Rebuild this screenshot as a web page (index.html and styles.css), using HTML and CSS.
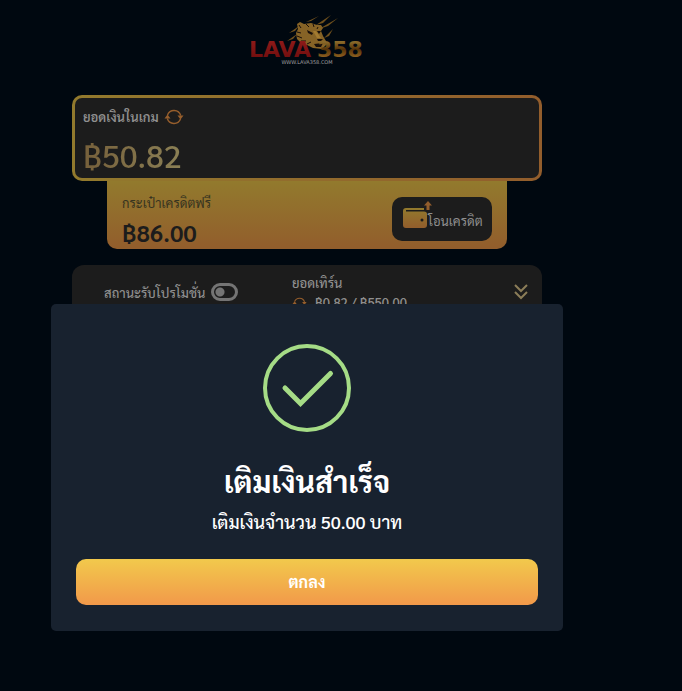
FILE: index.html
```html
<!DOCTYPE html>
<html lang="th">
<head>
  <meta charset="UTF-8">
  <meta name="viewport" content="width=device-width, initial-scale=1.0">
  <title>LAVA 358</title>
  <link rel="stylesheet" href="styles.css">
</head>
<body>
  <svg class="defs" width="0" height="0" aria-hidden="true">
    <defs>
      <linearGradient id="gold" x1="0" y1="0" x2="0" y2="1">
        <stop offset="0" stop-color="#927a2d"/>
        <stop offset="1" stop-color="#925d2c"/>
      </linearGradient>
      <linearGradient id="red" x1="0" y1="0" x2="0" y2="1">
        <stop offset="0" stop-color="#941d1b"/>
        <stop offset="1" stop-color="#6b0b0c"/>
      </linearGradient>
      <linearGradient id="bronze" x1="0" y1="0" x2="0" y2="1">
        <stop offset="0.2" stop-color="#8a6a2a"/>
        <stop offset="0.5" stop-color="#553208"/>
        <stop offset="0.8" stop-color="#8d6020"/>
      </linearGradient>
      <symbol id="refresh" viewBox="0 0 20 16">
        <path d="M3.5 6A7 7 0 0 1 16.7 6.5M16.5 10A7 7 0 0 1 3.3 9.5" fill="none" stroke="#965e2c" stroke-width="1.4"/>
        <path d="M0.5 9.5L3.5 5.5L6.5 9.5ZM13.5 6.5H19.5L16.5 10.5Z" fill="#965e2c"/>
      </symbol>
    </defs>
  </svg>

  <div class="page">
    <header class="header">
      <svg class="logo" viewBox="0 0 120 56" role="img" aria-label="LAVA 358">
        <!-- claw marks -->
        <path d="M59 11L72 5L64 10ZM69 14L84 4L76 12ZM72 18L91 7L81 15ZM77 27L86 18L82 25ZM42 22L52 15L48 20ZM40 30L50 23L46 28Z" fill="#70511d"/>
        <!-- tiger head -->
        <path d="M50 13L53 11L57 13L64 12L70 14L74 14L76 17L74 20L76 25L79 30L79 34L75 38L66 37L60 34L54 32L50 28L49 22L51 18Z" fill="#866326"/>
        <path d="M52 14L54 17M59 13L62 16M66 13L67 16M50 21L54 22M50 25L55 27M54 30L59 30M60 33L64 31M71 16L70 18" fill="none" stroke="#180f0a" stroke-width="1"/>
        <path d="M60 19L66 22L65 24L61 22ZM70 20L74 20L72 23ZM70 28L76 28L74 30L71 30ZM67 33L76 32L74 36L69 36Z" fill="#180f0a"/>
        <path d="M66 20L69 20L74 27L70 27Z" fill="#a37b30"/>
        <text class="logo-name" x="2" y="46" fill="url(#red)">LAVA</text>
        <text class="logo-name" x="70" y="46" fill="url(#bronze)">358</text>
        <text class="logo-url" x="60" y="53" text-anchor="middle">WWW.LAVA358.COM</text>
      </svg>
    </header>

    <main class="wallet">
      <section class="balance">
        <div class="balance-title">
          <h2>ยอดเงินในเกม</h2>
          <button class="icon-btn" type="button" aria-label="รีเฟรช">
            <svg width="20" height="16"><use href="#refresh"/></svg>
          </button>
        </div>
        <p class="balance-amount">฿50.82</p>
      </section>

      <section class="credit">
        <div>
          <p class="credit-title">กระเป๋าเครดิตฟรี</p>
          <p class="credit-amount">฿86.00</p>
        </div>
        <button class="transfer" type="button">
          <svg width="30" height="30" viewBox="0 0 30 30">
            <path d="M4 8H22V10H4V11.500H22Q25 11.500 25 14V25Q25 28 22 28H4Q1 28 1 25V11Q1 8 4 8Z" fill="url(#gold)"/>
            <circle cx="20" cy="20" r="1.5" fill="#1c1c1c"/>
            <path d="M26 1L30 5.500H27.500V10H24.500V5.500H22Z" fill="#925d2c"/>
          </svg>
          <span>โอนเครดิต</span>
        </button>
      </section>

      <section class="promo">
        <label class="promo-status">
          <span>สถานะรับโปรโมชั่น</span>
          <input class="toggle" type="checkbox">
        </label>
        <div class="turnover">
          <p>ยอดเทิร์น</p>
          <div class="turnover-value">
            <button class="icon-btn" type="button" aria-label="รีเฟรชยอดเทิร์น">
              <svg width="15" height="12"><use href="#refresh"/></svg>
            </button>
            <span>฿0.82 / ฿550.00</span>
          </div>
        </div>
        <button class="icon-btn expand" type="button" aria-label="แสดงเพิ่มเติม">
          <svg width="14" height="16" viewBox="0 0 14 16">
            <path d="M1 1L7 7L13 1M1 8L7 14L13 8" fill="none" stroke="#8b7d58" stroke-width="2"/>
          </svg>
        </button>
      </section>
    </main>
  </div>

  <div class="overlay">
    <div class="modal" role="dialog" aria-modal="true" aria-labelledby="modal-title">
      <svg class="modal-icon" viewBox="0 0 88 88" aria-hidden="true">
        <circle cx="44" cy="44" r="42" fill="none" stroke="#a5dc86" stroke-width="4"/>
        <path d="M22 44L37.500 59.500L67.500 29.500" fill="none" stroke="#a5dc86" stroke-width="5" stroke-linecap="round"/>
      </svg>
      <h1 id="modal-title">เติมเงินสำเร็จ</h1>
      <p class="modal-text">เติมเงินจำนวน 50.00 บาท</p>
      <button class="confirm" type="button">ตกลง</button>
    </div>
  </div>
</body>
</html>
```

FILE: styles.css
```css
* {
  margin: 0;
  padding: 0;
  box-sizing: border-box;
}
body {
  min-height: 100vh;
  background-color: #000810;
  font-family: Sarabun, "Noto Sans Thai", "Noto Sans", sans-serif;
  color: #8f8f8f;
}
button {
  border: none;
  background: none;
  font-family: inherit;
  cursor: pointer;
}
svg {
  display: block;
}
.defs {
  position: absolute;
}
.page,
.overlay {
  padding-right: 68px;
}

.header {
  padding-top: 11px;
  height: 95px;
}
.logo {
  width: 120px;
  height: 56px;
  margin: 0 auto;
}
.logo-name {
  font-family: "DejaVu Sans", sans-serif;
  font-size: 22px;
  font-weight: bold;
}
.logo-url {
  font-family: "DejaVu Sans", sans-serif;
  font-size: 5px;
  fill: #a0a0a0;
}

.wallet {
  max-width: 470px;
  margin: 0 auto;
}
.balance {
  height: 86px;
  padding: 7px 8px;
  border: 3px solid transparent;
  border-radius: 10px;
  background: linear-gradient(#1c1c1c, #1c1c1c) padding-box,
              linear-gradient(90deg, #927a2d, #925d2c) border-box;
}
.balance-title {
  display: flex;
  align-items: center;
  gap: 5px;
  height: 24px;
}
.balance-title h2 {
  font-size: 13px;
  font-weight: 600;
  line-height: 22px;
}
.balance-amount {
  width: fit-content;
  font-size: 32px;
  font-weight: 500;
  line-height: 52px;
  background: linear-gradient(90deg, #76603b, #8b8055);
  background-clip: text;
  color: transparent;
}

.credit {
  display: flex;
  justify-content: space-between;
  align-items: center;
  height: 68px;
  margin: 0 35px;
  padding: 8px 15px 0;
  border-radius: 0 0 10px 10px;
  background: linear-gradient(#927a2d, #925d2c);
  color: #1c1c1c;
}
.credit-title {
  font-size: 13px;
  line-height: 26px;
  color: #373420;
}
.credit-amount {
  font-size: 24px;
  font-weight: 600;
  line-height: 32px;
}
.transfer {
  display: flex;
  align-items: center;
  width: 100px;
  height: 44px;
  padding: 2px 10px 0;
  border-radius: 10px;
  background-color: #1c1c1c;
  color: #8f8f8f;
  font-size: 13px;
  white-space: nowrap;
}
.transfer svg {
  flex-shrink: 0;
  margin: 0 -4px 10px 0;
}

.promo {
  display: flex;
  height: 88px;
  margin-top: 16px;
  padding: 8px 14px 0 32px;
  border-radius: 12px;
  background-color: #1c1c1c;
  font-size: 13px;
  font-weight: 500;
}
.promo-status {
  display: flex;
  align-items: center;
  gap: 6px;
  width: 188px;
  height: 38px;
  white-space: nowrap;
}
.toggle {
  appearance: none;
  width: 27px;
  height: 18px;
  border: 3px solid #747474;
  border-radius: 9px;
  background: radial-gradient(circle at 6px 6px, #747474 4px, transparent 5px);
}
.turnover {
  line-height: 20px;
}
.turnover-value {
  display: flex;
  align-items: center;
  gap: 8px;
}
.expand {
  height: 38px;
  margin-left: auto;
}

.overlay {
  position: absolute;
  inset: 0;
  padding-top: 304px;
}
.modal {
  max-width: 512px;
  margin: 0 auto;
  padding: 40px 25px 26px;
  border-radius: 5px;
  background-color: #18222f;
  color: #fff;
  text-align: center;
}
.modal-icon {
  width: 88px;
  height: 88px;
  margin: 0 auto 24px;
}
.modal h1 {
  font-size: 30px;
  font-weight: 700;
  line-height: 50px;
}
.modal-text {
  margin-bottom: 22px;
  font-size: 18px;
  font-weight: 500;
  line-height: 31px;
}
.confirm {
  width: 100%;
  height: 46px;
  padding-bottom: 2px;
  border-radius: 10px;
  background: linear-gradient(#f2c94c, #f2994a);
  color: #fff;
  font-size: 16px;
  font-weight: 700;
}
```
